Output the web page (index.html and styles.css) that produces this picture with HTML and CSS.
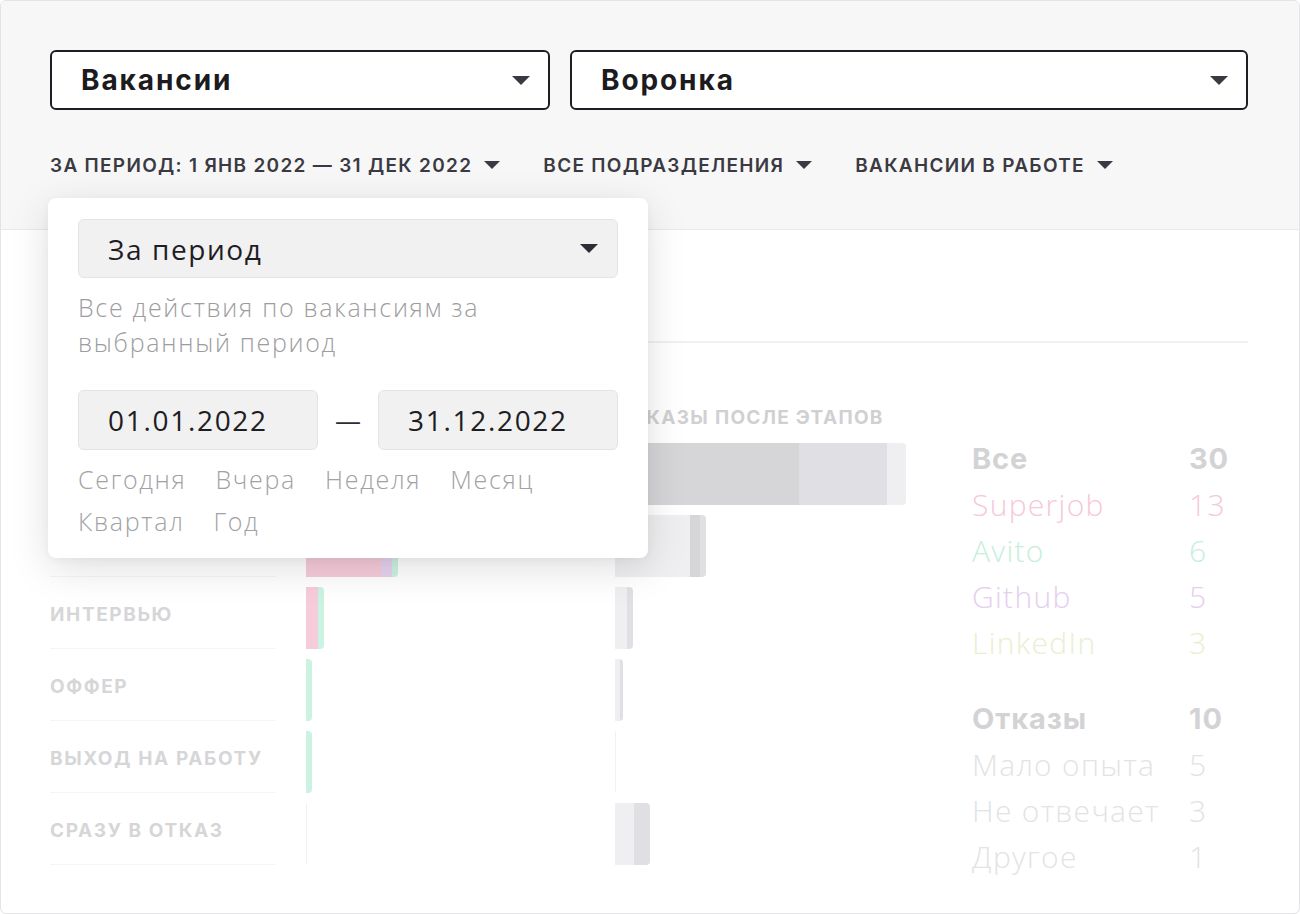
FILE: index.html
```html
<!DOCTYPE html>
<html lang="ru">
<head>
<meta charset="utf-8">
<title>Воронка — отчёт</title>
<link rel="stylesheet" href="styles.css">
</head>
<body>
<div class="app">
  <header class="toolbar">
    <div class="selects">
      <div class="select select--narrow">
        <span class="select-text">Вакансии</span>
        <svg class="caret caret--lg" viewBox="0 0 18 9"><path d="M0 0h18L9 9z"/></svg>
      </div>
      <div class="select select--wide">
        <span class="select-text">Воронка</span>
        <svg class="caret caret--lg" viewBox="0 0 18 9"><path d="M0 0h18L9 9z"/></svg>
      </div>
    </div>
    <div class="chips">
      <div class="chip">ЗА ПЕРИОД: 1 ЯНВ 2022 — 31 ДЕК 2022<svg class="caret caret--sm" viewBox="0 0 16 8"><path d="M0 0h16L8 8z"/></svg></div>
      <div class="chip">ВСЕ ПОДРАЗДЕЛЕНИЯ<svg class="caret caret--sm" viewBox="0 0 16 8"><path d="M0 0h16L8 8z"/></svg></div>
      <div class="chip">ВАКАНСИИ В РАБОТЕ<svg class="caret caret--sm" viewBox="0 0 16 8"><path d="M0 0h16L8 8z"/></svg></div>
    </div>
  </header>

  <main class="report">
    <div class="tabs"></div>
    <div class="chart">
      <div class="col col--labels">
        <div class="col-head"></div>
        <div class="stage"></div>
        <div class="stage"></div>
        <div class="stage">ИНТЕРВЬЮ</div>
        <div class="stage">ОФФЕР</div>
        <div class="stage">ВЫХОД НА РАБОТУ</div>
        <div class="stage">СРАЗУ В ОТКАЗ</div>
      </div>

      <div class="col col--sources">
        <div class="col-head"></div>
        <div class="bar-row"><div class="bar"><i class="seg seg--pink" style="width:130px"></i><i class="seg seg--green" style="width:60px"></i><i class="seg seg--lilac" style="width:50px"></i><i class="seg seg--lime" style="width:30px"></i></div></div>
        <div class="bar-row"><div class="bar"><i class="seg seg--pink" style="width:75px"></i><i class="seg seg--lilac" style="width:11px"></i><i class="seg seg--green" style="width:6px"></i></div></div>
        <div class="bar-row"><div class="bar"><i class="seg seg--pink" style="width:12px"></i><i class="seg seg--green" style="width:6px"></i></div></div>
        <div class="bar-row"><div class="bar"><i class="seg seg--green" style="width:6px"></i></div></div>
        <div class="bar-row"><div class="bar"><i class="seg seg--green" style="width:6px"></i></div></div>
        <div class="bar-row"><div class="bar bar--empty"></div></div>
      </div>

      <div class="col col--refusals">
        <div class="col-head col-head--refusals">ОТКАЗЫ ПОСЛЕ ЭТАПОВ</div>
        <div class="bar-row"><div class="bar"><i class="seg seg--dark" style="width:184px"></i><i class="seg seg--mid" style="width:88px"></i><i class="seg seg--light" style="width:19px"></i></div></div>
        <div class="bar-row"><div class="bar"><i class="seg seg--light" style="width:75px"></i><i class="seg seg--dark" style="width:10px"></i><i class="seg seg--mid" style="width:6px"></i></div></div>
        <div class="bar-row"><div class="bar"><i class="seg seg--light" style="width:12px"></i><i class="seg seg--mid" style="width:6px"></i></div></div>
        <div class="bar-row"><div class="bar"><i class="seg seg--light" style="width:5px"></i><i class="seg seg--mid" style="width:3px"></i></div></div>
        <div class="bar-row"><div class="bar bar--empty"></div></div>
        <div class="bar-row"><div class="bar"><i class="seg seg--light" style="width:19px"></i><i class="seg seg--mid" style="width:16px"></i></div></div>
      </div>

      <div class="legend">
        <div class="legend-group">
          <div class="legend-item legend-item--total"><span>Все</span><span>30</span></div>
          <div class="legend-item legend-item--pink"><span>Superjob</span><span>13</span></div>
          <div class="legend-item legend-item--green"><span>Avito</span><span>6</span></div>
          <div class="legend-item legend-item--lilac"><span>Github</span><span>5</span></div>
          <div class="legend-item legend-item--lime"><span>LinkedIn</span><span>3</span></div>
        </div>
        <div class="legend-group">
          <div class="legend-item legend-item--total"><span>Отказы</span><span>10</span></div>
          <div class="legend-item legend-item--muted"><span>Мало опыта</span><span>5</span></div>
          <div class="legend-item legend-item--muted"><span>Не отвечает</span><span>3</span></div>
          <div class="legend-item legend-item--muted"><span>Другое</span><span>1</span></div>
        </div>
      </div>
    </div>
  </main>

  <div class="popover">
    <div class="pselect">
      <span>За период</span>
      <svg class="caret caret--lg" viewBox="0 0 18 9"><path d="M0 0h18L9 9z"/></svg>
    </div>
    <p class="pdesc">Все действия по вакансиям за выбранный период</p>
    <div class="dates">
      <div class="date-input">01.01.2022</div>
      <span class="dash">—</span>
      <div class="date-input">31.12.2022</div>
    </div>
    <div class="quick">
      <span>Сегодня</span>
      <span>Вчера</span>
      <span>Неделя</span>
      <span>Месяц</span>
      <span>Квартал</span>
      <span>Год</span>
    </div>
  </div>
</div>
</body>
</html>
```

FILE: styles.css
```css
* { box-sizing: border-box; }

html, body {
  margin: 0;
  padding: 0;
  background: #ffffff;
}

body {
  font-family: "Inter", "Noto Sans", sans-serif;
}

.app {
  position: relative;
  width: 1300px;
  height: 914px;
  border: 1px solid #e4e4e6;
  border-radius: 6px;
  overflow: hidden;
  background: #ffffff;
}

/* ---------- toolbar ---------- */
.toolbar {
  height: 229px;
  background: #f7f7f8;
  border-bottom: 1px solid #e9e9eb;
  padding: 49px 51px 0 49px;
}

.selects {
  display: flex;
  gap: 20px;
}

.select {
  height: 60px;
  border: 2px solid #1f1d24;
  border-radius: 6px;
  background: #ffffff;
  display: flex;
  align-items: center;
  justify-content: space-between;
  padding: 0 18px 0 29px;
  color: #1c1b20;
}

.select--narrow { width: 500px; }
.select--wide { flex: 1; }

.select-text {
  font-weight: 700;
  font-size: 28px;
  letter-spacing: 1.9px;
}

.caret { fill: currentColor; flex: none; }
.caret--lg { width: 18px; height: 9px; color: #3a3840; }
.caret--sm { width: 16px; height: 8px; margin-left: 12px; }

.chips {
  display: flex;
  gap: 43px;
  margin-top: 41px;
}

.chip {
  display: flex;
  align-items: center;
  height: 28px;
  font-weight: 600;
  font-size: 19px;
  letter-spacing: 1.3px;
  color: #3b3a42;
  white-space: nowrap;
}

/* ---------- report ---------- */
.report {
  padding: 0 51px 0 49px;
}

.tabs {
  height: 113px;
  border-bottom: 2px solid #f1f1f2;
}

.chart {
  display: flex;
  gap: 30px;
  margin-top: 65px;
}

.col { display: flex; flex-direction: column; gap: 10px; }
.col--labels { width: 226px; }
.col--sources { width: 279px; }
.col--refusals { width: 327px; }

.col-head {
  height: 20px;
  line-height: 20px;
  margin-bottom: 5px;
  font-weight: 700;
  font-size: 19px;
  letter-spacing: 1.3px;
  color: #d0d0d2;
  white-space: nowrap;
}

.col-head--refusals { padding-left: 2px; }

.stage {
  height: 62px;
  border-bottom: 1px solid #f5f5f6;
  display: flex;
  align-items: center;
  padding-bottom: 6px;
  font-weight: 700;
  font-size: 19px;
  letter-spacing: 1.6px;
  color: #d6d6d8;
  white-space: nowrap;
}

.bar-row {
  height: 62px;
  display: flex;
}

.bar {
  display: flex;
  height: 100%;
  border-radius: 0 4px 4px 0;
  overflow: hidden;
}

.bar--empty {
  width: 1px;
  background: #f2f2f4;
}

.seg { display: block; height: 100%; }
.seg--pink  { background: #f6cbda; }
.seg--green { background: #cbf3e1; }
.seg--lilac { background: #e6d2ee; }
.seg--lime  { background: #eaf2d4; }
.seg--dark  { background: #d6d6d9; }
.seg--mid   { background: #e0dfe3; }
.seg--light { background: #efeff1; }

/* ---------- legend ---------- */
.legend {
  flex: 1;
  padding-top: 28px;
  display: flex;
  flex-direction: column;
  gap: 30px;
  font-family: "Open Sans", "Noto Sans", sans-serif;
}

.legend-item {
  display: grid;
  grid-template-columns: 217px auto;
  height: 46px;
  line-height: 46px;
  font-size: 30px;
  font-weight: 300;
  letter-spacing: 1.3px;
  white-space: nowrap;
}

.legend-item--total { font-family: "Inter", sans-serif; font-weight: 700; font-size: 29px; color: #d3d3d5; letter-spacing: 0.9px; }
.legend-item--pink  { color: #f6c8d8; }
.legend-item--green { color: #c3efdb; }
.legend-item--lilac { color: #e6ceee; }
.legend-item--lime  { color: #e8f0d1; }
.legend-item--muted { color: #e3e3e5; }

/* ---------- popover ---------- */
.popover {
  position: absolute;
  left: 47px;
  top: 197px;
  width: 600px;
  height: 360px;
  padding: 21px 30px 0;
  background: #ffffff;
  border-radius: 8px;
  box-shadow: 0 10px 40px rgba(0, 0, 0, 0.13), 0 2px 8px rgba(0, 0, 0, 0.04);
  font-family: "Open Sans", "Noto Sans", sans-serif;
}

.pselect {
  height: 59px;
  background: #f1f1f2;
  border: 1px solid #e3e3e5;
  border-radius: 6px;
  display: flex;
  align-items: center;
  justify-content: space-between;
  padding: 0 19px 0 29px;
  font-size: 28px;
  letter-spacing: 1.6px;
  color: #1e1d22;
}

.pselect .caret--lg { color: #2f2d34; }

.pdesc {
  margin: 12px 0 0;
  font-size: 25px;
  line-height: 35px;
  font-weight: 300;
  letter-spacing: 1.7px;
  color: #9d9d9f;
  width: 430px;
}

.dates {
  display: flex;
  align-items: center;
  margin-top: 30px;
}

.date-input {
  width: 240px;
  height: 60px;
  background: #f1f1f2;
  border: 1px solid #e3e3e5;
  border-radius: 6px;
  padding-left: 29px;
  display: flex;
  align-items: center;
  font-size: 28px;
  letter-spacing: 1.7px;
  color: #1e1d22;
}

.dash {
  width: 60px;
  text-align: center;
  font-size: 26px;
  color: #2f2d34;
}

.quick {
  display: flex;
  flex-wrap: wrap;
  column-gap: 29px;
  margin-top: 8px;
  font-size: 25px;
  line-height: 42px;
  font-weight: 300;
  letter-spacing: 1.7px;
  color: #a2a2a4;
}
```
